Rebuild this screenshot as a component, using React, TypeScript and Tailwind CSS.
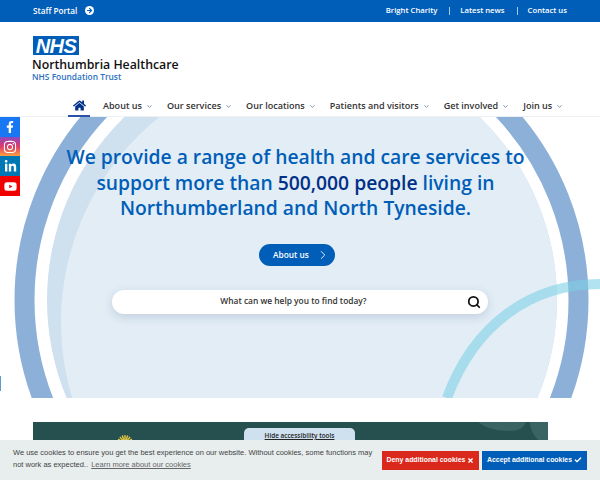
import React from 'react';
import { ChevronDown, ChevronRight, Search, ArrowRight, X, Check } from 'lucide-react';
import { FaFacebookF, FaInstagram, FaLinkedinIn, FaYoutube, FaHome } from 'react-icons/fa';

const navItems = ['About us', 'Our services', 'Our locations', 'Patients and visitors', 'Get involved', 'Join us'];

function HeroArcs() {
  return (
    <svg className="absolute inset-0" width="600" height="281" viewBox="0 117 600 281" aria-hidden="true">
      <defs>
        <clipPath id="disc">
          <circle cx="302" cy="300" r="255" />
        </clipPath>
      </defs>
      <circle cx="301.5" cy="300" r="277" fill="none" stroke="#8cb0d8" strokeWidth="20" />
      <circle cx="302" cy="300" r="255" fill="#cfe0ef" />
      <circle cx="324" cy="322" r="263" fill="#e2edf6" clipPath="url(#disc)" />
      <path d="M447 398C474 325 530 284 600 284" fill="none" stroke="#7fd0e6" strokeOpacity="0.6" strokeWidth="10" />
    </svg>
  );
}

function Sun() {
  const rays = [-60, -40, -20, 0, 20, 40, 60];
  return (
    <svg className="absolute left-[84px] top-[12px]" width="16" height="8" viewBox="0 0 16 8" aria-hidden="true">
      {rays.map((a) => (
        <line key={a} x1="8" y1="9" x2="8" y2="1" stroke="#e3c843" strokeWidth="1.4" transform={`rotate(${a} 8 9)`} />
      ))}
    </svg>
  );
}

export default function App() {
  return (
    <div className="relative h-[480px] w-[600px] overflow-hidden bg-white font-['Open_Sans',sans-serif]">
      {/* top bar */}
      <div className="flex h-[22px] items-center justify-between whitespace-nowrap bg-[#005eb8] px-[33px] text-[8.2px] font-semibold text-white">
        <div className="flex items-center gap-[8px]">
          <span>Staff Portal</span>
          <span className="flex h-[9px] w-[9px] items-center justify-center rounded-full bg-white">
            <ArrowRight className="h-[7px] w-[7px] text-[#005eb8]" strokeWidth={4} />
          </span>
        </div>
        <div className="flex items-center text-[7.7px]">
          <span>Bright Charity</span>
          <span className="ml-[12px] mr-[10px] h-[8px] w-px bg-[#a9c9e8]" />
          <span>Latest news</span>
          <span className="ml-[12px] mr-[10px] h-[8px] w-px bg-[#a9c9e8]" />
          <span>Contact us</span>
        </div>
      </div>

      {/* logo */}
      <div className="h-[73px] pl-[32px] pt-[14px]">
        <div className="ml-px flex h-[19px] w-[46px] items-center justify-center bg-[#005eb8] font-['Liberation_Sans',sans-serif] text-[20px] font-bold italic leading-none tracking-[-0.5px] text-white">
          NHS
        </div>
        <div className="mt-[2px] text-[12.3px] font-semibold leading-[15px] text-[#111]">Northumbria Healthcare</div>
        <div className="text-[8.4px] font-semibold leading-[10px] text-[#2b6fc0]">NHS Foundation Trust</div>
      </div>

      {/* nav */}
      <nav className="flex h-[22px] items-start border-b border-[#eef1f4] pl-[68px]">
        <div className="flex h-[22px] w-[22px] justify-center border-b-2 border-[#2c4fa8] pt-[4px]">
          <FaHome className="h-[13px] w-[13px] text-[#003087]" />
        </div>
        <div className="flex gap-[14px] whitespace-nowrap pl-[13px] pt-[4px] text-[9.05px] font-semibold leading-[14px] text-[#333]">
          {navItems.map((item) => (
            <span key={item} className="flex items-center gap-[4px]">
              {item}
              <ChevronDown className="h-[7px] w-[7px] text-[#4a6a90]" strokeWidth={2.5} />
            </span>
          ))}
        </div>
      </nav>

      {/* hero */}
      <section className="relative h-[281px]">
        <HeroArcs />
        <div className="relative flex flex-col items-center pt-[27px]">
          <h1 className="ml-[-9px] w-[480px] text-center text-[19.3px] font-semibold leading-[25.5px] text-[#005eb8]">
            We provide a range of health and care services to support more than{' '}
            <span className="text-[#003087]">500,000 people</span> living in Northumberland and North Tyneside.
          </h1>
          <button
            type="button"
            className="ml-[-6px] mt-[23px] flex h-[22px] w-[76px] items-center gap-[7px] rounded-full bg-[#005eb8] pl-[14px] pt-px text-[8.3px] font-semibold text-white"
          >
            About us
            <ChevronRight className="h-[14px] w-[14px]" strokeWidth={1.5} />
          </button>
          <div className="relative mt-[24px] flex h-[24px] w-[376px] items-center justify-center rounded-full bg-white pr-[13px] text-[8.4px] font-semibold text-[#333] shadow-[0_3px_10px_rgba(60,90,120,0.2)]">
            What can we help you to find today?
            <Search className="absolute right-[7px] top-[5px] h-[14px] w-[14px] text-[#111]" strokeWidth={3} />
          </div>
        </div>
      </section>

      {/* section below hero */}
      <div className="pt-[24px]">
        <div className="relative mx-[33px] flex h-[60px] w-[515px] justify-center overflow-hidden bg-[#265050]">
          <Sun />
          <svg className="absolute right-0 top-0" width="70" height="20" viewBox="0 0 70 20" aria-hidden="true">
            <path d="M0 0H48C46 6 40 9 32 9 18 9 8 6 0 0Z" fill="#3a6363" />
            <path d="M52 0H70V20H62C56 14 52 8 52 0Z" fill="#3a6363" />
          </svg>
          <div className="relative ml-[18px] mt-[6px] h-[14px] w-[111px] rounded-t-[5px] bg-[#cfe0ef] pt-[3px] text-center text-[6.4px] font-semibold text-[#222] underline">
            Hide accessibility tools
          </div>
        </div>
      </div>

      {/* social */}
      <div className="absolute left-0 top-[117px] flex w-[20px] flex-col text-white">
        <span className="flex h-[20px] items-center justify-center bg-[#1877f2]">
          <FaFacebookF className="h-[12px] w-[12px]" />
        </span>
        <span className="flex h-[19px] items-center justify-center bg-[linear-gradient(to_top,#f9a03f,#dd3b6a,#8a49c0)]">
          <FaInstagram className="h-[14px] w-[14px]" />
        </span>
        <span className="flex h-[20px] items-center justify-center bg-[#0077b5]">
          <FaLinkedinIn className="h-[13px] w-[13px]" />
        </span>
        <span className="flex h-[20px] items-center justify-center bg-[#f00000]">
          <FaYoutube className="h-[13px] w-[13px]" />
        </span>
      </div>
      <div className="absolute left-0 top-[376px] h-[15px] w-px bg-[#5a9bd0]" />

      {/* cookie bar */}
      <div className="absolute bottom-0 left-0 flex h-[40px] w-[600px] items-center bg-[#e8edee] pb-[2px] pl-[13px] font-['Liberation_Sans',sans-serif]">
        <p className="w-[366px] text-[7.5px] leading-[12.5px] text-[#444]">
          We use cookies to ensure you get the best experience on our website. Without cookies, some functions may not
          work as expected..{' '}
          <span className="ml-[1px] text-[#666] underline">Learn more about our cookies</span>
        </p>
        <div className="ml-[3px] mt-[2px] flex gap-[3px] whitespace-nowrap text-[6.9px] font-bold text-white">
          <span className="flex h-[19px] w-[97px] items-center justify-center gap-[2px] bg-[#da291c]">
            Deny additional cookies
            <X className="h-[7px] w-[7px]" strokeWidth={4} />
          </span>
          <span className="flex h-[19px] w-[105px] items-center justify-center gap-[2px] bg-[#005eb8]">
            Accept additional cookies
            <Check className="h-[8px] w-[8px]" strokeWidth={4} />
          </span>
        </div>
      </div>
    </div>
  );
}
